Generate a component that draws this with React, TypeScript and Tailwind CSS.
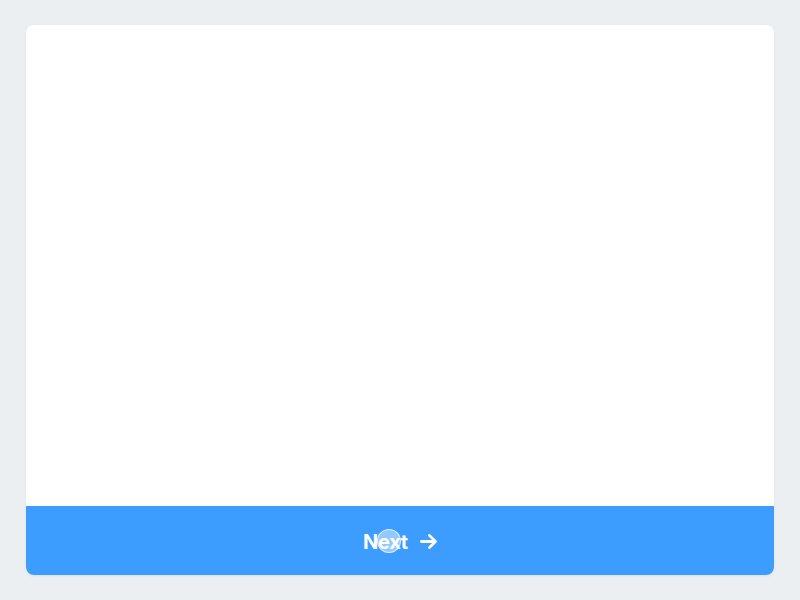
import React from 'react';

export default function App() {
    return (
        <div className="h-[600px] w-[800px] bg-[#eceff2] px-[26px] pt-[25px] pb-[25px] font-['Inter',sans-serif]">
            <div className="flex h-full flex-col overflow-hidden rounded-lg bg-white shadow-[0_1px_3px_rgba(0,0,0,0.06)]">
                {/* content area */}
                <div className="flex-1" />

                {/* footer button */}
                <button className="relative flex h-[69px] w-full items-center justify-center gap-[10px] bg-[#3d9dff] pt-[2px] pl-[2px] text-white">
                    <span className="text-[20px] font-bold tracking-[-0.3px]">Next</span>
                    <svg width="21" height="21" viewBox="0 0 24 24" fill="none" stroke="currentColor" strokeWidth="3.2" strokeLinecap="round" strokeLinejoin="round">
                        <path d="M4 12h15" />
                        <path d="M13 5l7 7-7 7" />
                    </svg>
                    {/* touch indicator */}
                    <span className="absolute left-[351px] top-[23px] h-[24px] w-[24px] rounded-full border border-white/70 bg-white/45" />
                </button>
            </div>
        </div>
    );
}
